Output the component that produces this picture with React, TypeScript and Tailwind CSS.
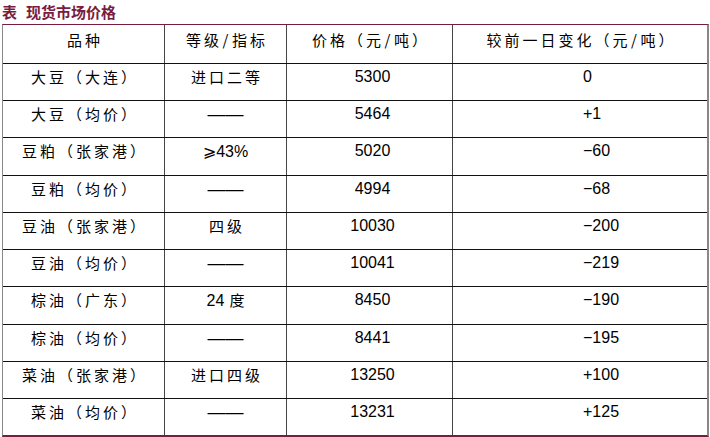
import React from 'react'

const CJK = "font-['Noto_Sans_CJK_SC',sans-serif]"
const NUM = "font-['Liberation_Sans','DejaVu_Sans','Noto_Sans_CJK_SC',sans-serif]"

type Row = {
  name: string
  grade: string
  price: string
  change: string
}

const rows: Row[] = [
  { name: '大豆（大连）', grade: '进口二等', price: '5300', change: '0' },
  { name: '大豆（均价）', grade: '——', price: '5464', change: '+1' },
  { name: '豆粕（张家港）', grade: '⩾43%', price: '5020', change: '−60' },
  { name: '豆粕（均价）', grade: '——', price: '4994', change: '−68' },
  { name: '豆油（张家港）', grade: '四级', price: '10030', change: '−200' },
  { name: '豆油（均价）', grade: '——', price: '10041', change: '−219' },
  { name: '棕油（广东）', grade: '24 度', price: '8450', change: '−190' },
  { name: '棕油（均价）', grade: '——', price: '8441', change: '−195' },
  { name: '菜油（张家港）', grade: '进口四级', price: '13250', change: '+100' },
  { name: '菜油（均价）', grade: '——', price: '13231', change: '+125' },
]

// row heights so the rules land where the source table has them
const heights = ['h-[37px]', 'h-[37px]', 'h-[38px]', 'h-[37px]', 'h-[37px]', 'h-[37px]', 'h-[38px]', 'h-[37px]', 'h-[37px]', 'h-[36px]']

const cols = 'grid grid-cols-[162px_122px_166px_1fr]'
const cell = 'border-r border-[#444]'

function Slash() {
  return <span className="inline-block w-[7px] text-center tracking-normal mr-[3px]">/</span>
}

function Grade({ value }: { value: string }) {
  if (value === '——') {
    return <span className="font-['Liberation_Sans',sans-serif] text-[18px]">——</span>
  }
  if (value === '⩾43%') {
    return <span className={`${NUM} text-[16px]`}>⩾43%</span>
  }
  if (value === '24 度') {
    return (
      <span className="text-[16px]">
        <span className={NUM}>24</span>
        <span className={`${CJK} text-[15px] ml-[5px]`}>度</span>
      </span>
    )
  }
  return <span className={`${CJK} text-[15px] tracking-[3px] pl-[3px]`}>{value}</span>
}

export default function App() {
  return (
    <div className="w-[710px] h-[437px] bg-white text-black overflow-hidden">
      {/* Caption */}
      <div className={`${CJK} h-[24px] pl-[2px] pt-[2px] text-[15px] leading-[20px] font-bold text-[#7a1c3f]`}>
        表<span className="ml-[9px]">现货市场价格</span>
      </div>

      {/* Table */}
      <div className="ml-[2px] w-[707px] border-t border-l border-r-2 border-b-2 border-t-[#7a1c3f] border-l-[#888] border-r-[#888] border-b-[#7a1c3f]">
        {/* Header */}
        <div className={`${cols} h-[39px] border-b border-[#111] ${CJK} text-[15px] leading-[20px] tracking-[3px]`}>
          <div className={`${cell} pt-[5px] pl-[3px] text-center`}>品种</div>
          <div className={`${cell} pt-[5px] pl-[3px] text-center`}>
            等级<Slash />指标
          </div>
          <div className={`${cell} pt-[5px] pl-[3px] text-center`}>
            价格（元<Slash />吨）
          </div>
          <div className="pt-[5px] pl-[3px] text-center">
            较前一日变化（元<Slash />吨）
          </div>
        </div>

        {rows.map((r, i) => (
          <div
            key={r.name}
            className={[
              cols,
              heights[i],
              'leading-[20px]',
              i < rows.length - 1 ? 'border-b border-[#111]' : '',
            ].join(' ')}
          >
            <div className={`${cell} pt-[3px] pl-[3px] text-center ${CJK} text-[15px] tracking-[3px]`}>
              {r.name}
            </div>
            <div className={`${cell} pt-[3px] text-center`}>
              <Grade value={r.grade} />
            </div>
            <div className={`${cell} pt-[3px] pl-[6px] text-center ${NUM} text-[16px]`}>
              {r.price}
            </div>
            <div className={`pt-[3px] pl-[130px] ${NUM} text-[16px]`}>{r.change}</div>
          </div>
        ))}
      </div>
    </div>
  )
}
